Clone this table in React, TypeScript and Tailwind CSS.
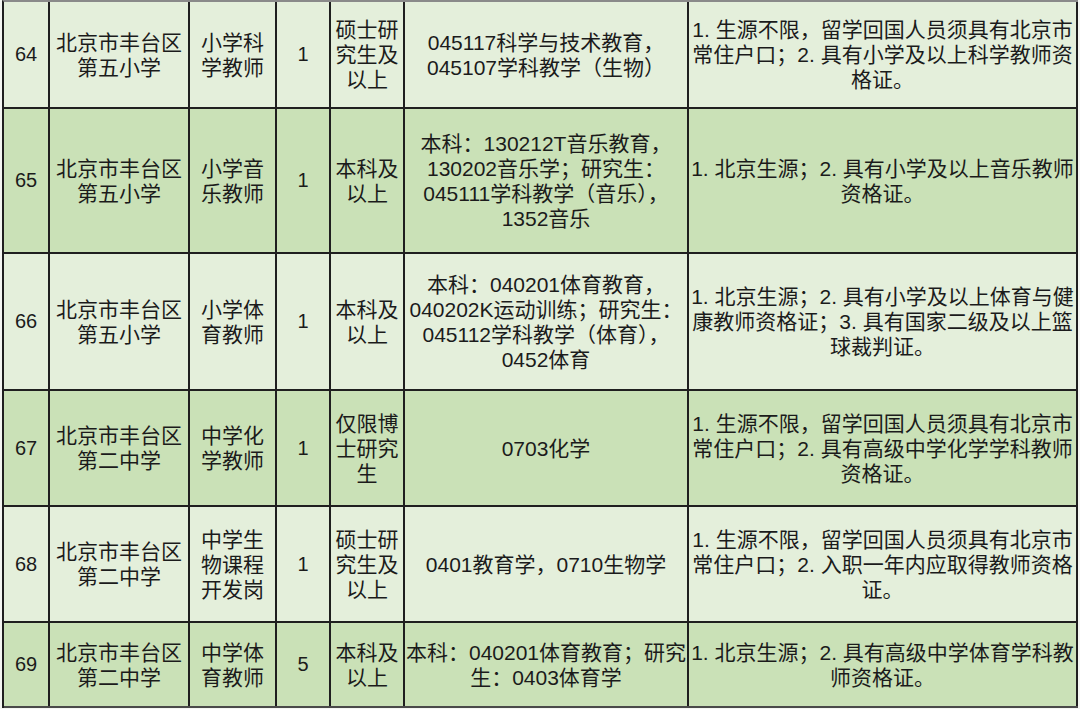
const rows = [
  {
    no: "64",
    h: "h-[107px]",
    bg: "bg-[#e4efdb]",
    school: ["北京市丰台区", "第五小学"],
    post: ["小学科", "学教师"],
    count: "1",
    edu: ["硕士研", "究生及", "以上"],
    major: ["045117科学与技术教育，", "045107学科教学（生物）"],
    req: ["1. 生源不限，留学回国人员须具有北京市", "常住户口；2. 具有小学及以上科学教师资", "格证。"],
  },
  {
    no: "65",
    h: "h-[145px]",
    bg: "bg-[#cae1b7]",
    school: ["北京市丰台区", "第五小学"],
    post: ["小学音", "乐教师"],
    count: "1",
    edu: ["本科及", "以上"],
    major: ["本科：130212T音乐教育，", "130202音乐学；研究生：", "045111学科教学（音乐），", "1352音乐"],
    req: ["1. 北京生源；2. 具有小学及以上音乐教师", "资格证。"],
  },
  {
    no: "66",
    h: "h-[137px]",
    bg: "bg-[#e4efdb]",
    school: ["北京市丰台区", "第五小学"],
    post: ["小学体", "育教师"],
    count: "1",
    edu: ["本科及", "以上"],
    major: ["本科：040201体育教育，", "040202K运动训练；研究生：", "045112学科教学（体育），", "0452体育"],
    req: ["1. 北京生源；2. 具有小学及以上体育与健", "康教师资格证；3. 具有国家二级及以上篮", "球裁判证。"],
  },
  {
    no: "67",
    h: "h-[116px]",
    bg: "bg-[#cae1b7]",
    school: ["北京市丰台区", "第二中学"],
    post: ["中学化", "学教师"],
    count: "1",
    edu: ["仅限博", "士研究", "生"],
    major: ["0703化学"],
    req: ["1. 生源不限，留学回国人员须具有北京市", "常住户口；2. 具有高级中学化学学科教师", "资格证。"],
  },
  {
    no: "68",
    h: "h-[116px]",
    bg: "bg-[#e4efdb]",
    school: ["北京市丰台区", "第二中学"],
    post: ["中学生", "物课程", "开发岗"],
    count: "1",
    edu: ["硕士研", "究生及", "以上"],
    major: ["0401教育学，0710生物学"],
    req: ["1. 生源不限，留学回国人员须具有北京市", "常住户口；2. 入职一年内应取得教师资格", "证。"],
  },
  {
    no: "69",
    h: "h-[85px]",
    bg: "bg-[#cae1b7]",
    school: ["北京市丰台区", "第二中学"],
    post: ["中学体", "育教师"],
    count: "5",
    edu: ["本科及", "以上"],
    major: ["本科：040201体育教育；研究", "生：0403体育学"],
    req: ["1. 北京生源；2. 具有高级中学体育学科教", "师资格证。"],
  },
];

const Cell = ({ w, lines }: { w: string; lines: string[] }) => (
  <div className={`${w} shrink-0 h-full flex flex-col items-center justify-center border-r-2 border-[#1f1f1f] text-center`}>
    {lines.map((l, i) => (
      <span key={i} className="block whitespace-nowrap">
        {l}
      </span>
    ))}
  </div>
);

export default function App() {
  return (
    <div
      className="w-[1080px] h-[709px] bg-[#f4f6f2] overflow-hidden text-[#1b1b1b] text-[21px] leading-[25px]"
      style={{ fontFamily: '"Liberation Sans", "Noto Sans CJK SC", sans-serif' }}
    >
      <div className="ml-[2px] w-[1076px] border-l-2 border-t-2 border-l-[#1f1f1f] border-t-[#8a8a8a]">
        {rows.map((r) => (
          <div key={r.no} className={`${r.h} ${r.bg} flex border-b-2 border-[#1f1f1f] ${r.no === "69" ? "border-[#4a4a4a]" : ""}`}>
            <Cell w="w-[46px] text-[20px]" lines={[r.no]} />
            <Cell w="w-[140px]" lines={r.school} />
            <Cell w="w-[87px]" lines={r.post} />
            <Cell w="w-[54px] text-[20px]" lines={[r.count]} />
            <Cell w="w-[74px]" lines={r.edu} />
            <Cell w="w-[284px]" lines={r.major} />
            <Cell w="flex-1 min-w-0" lines={r.req} />
          </div>
        ))}
      </div>
    </div>
  );
}
